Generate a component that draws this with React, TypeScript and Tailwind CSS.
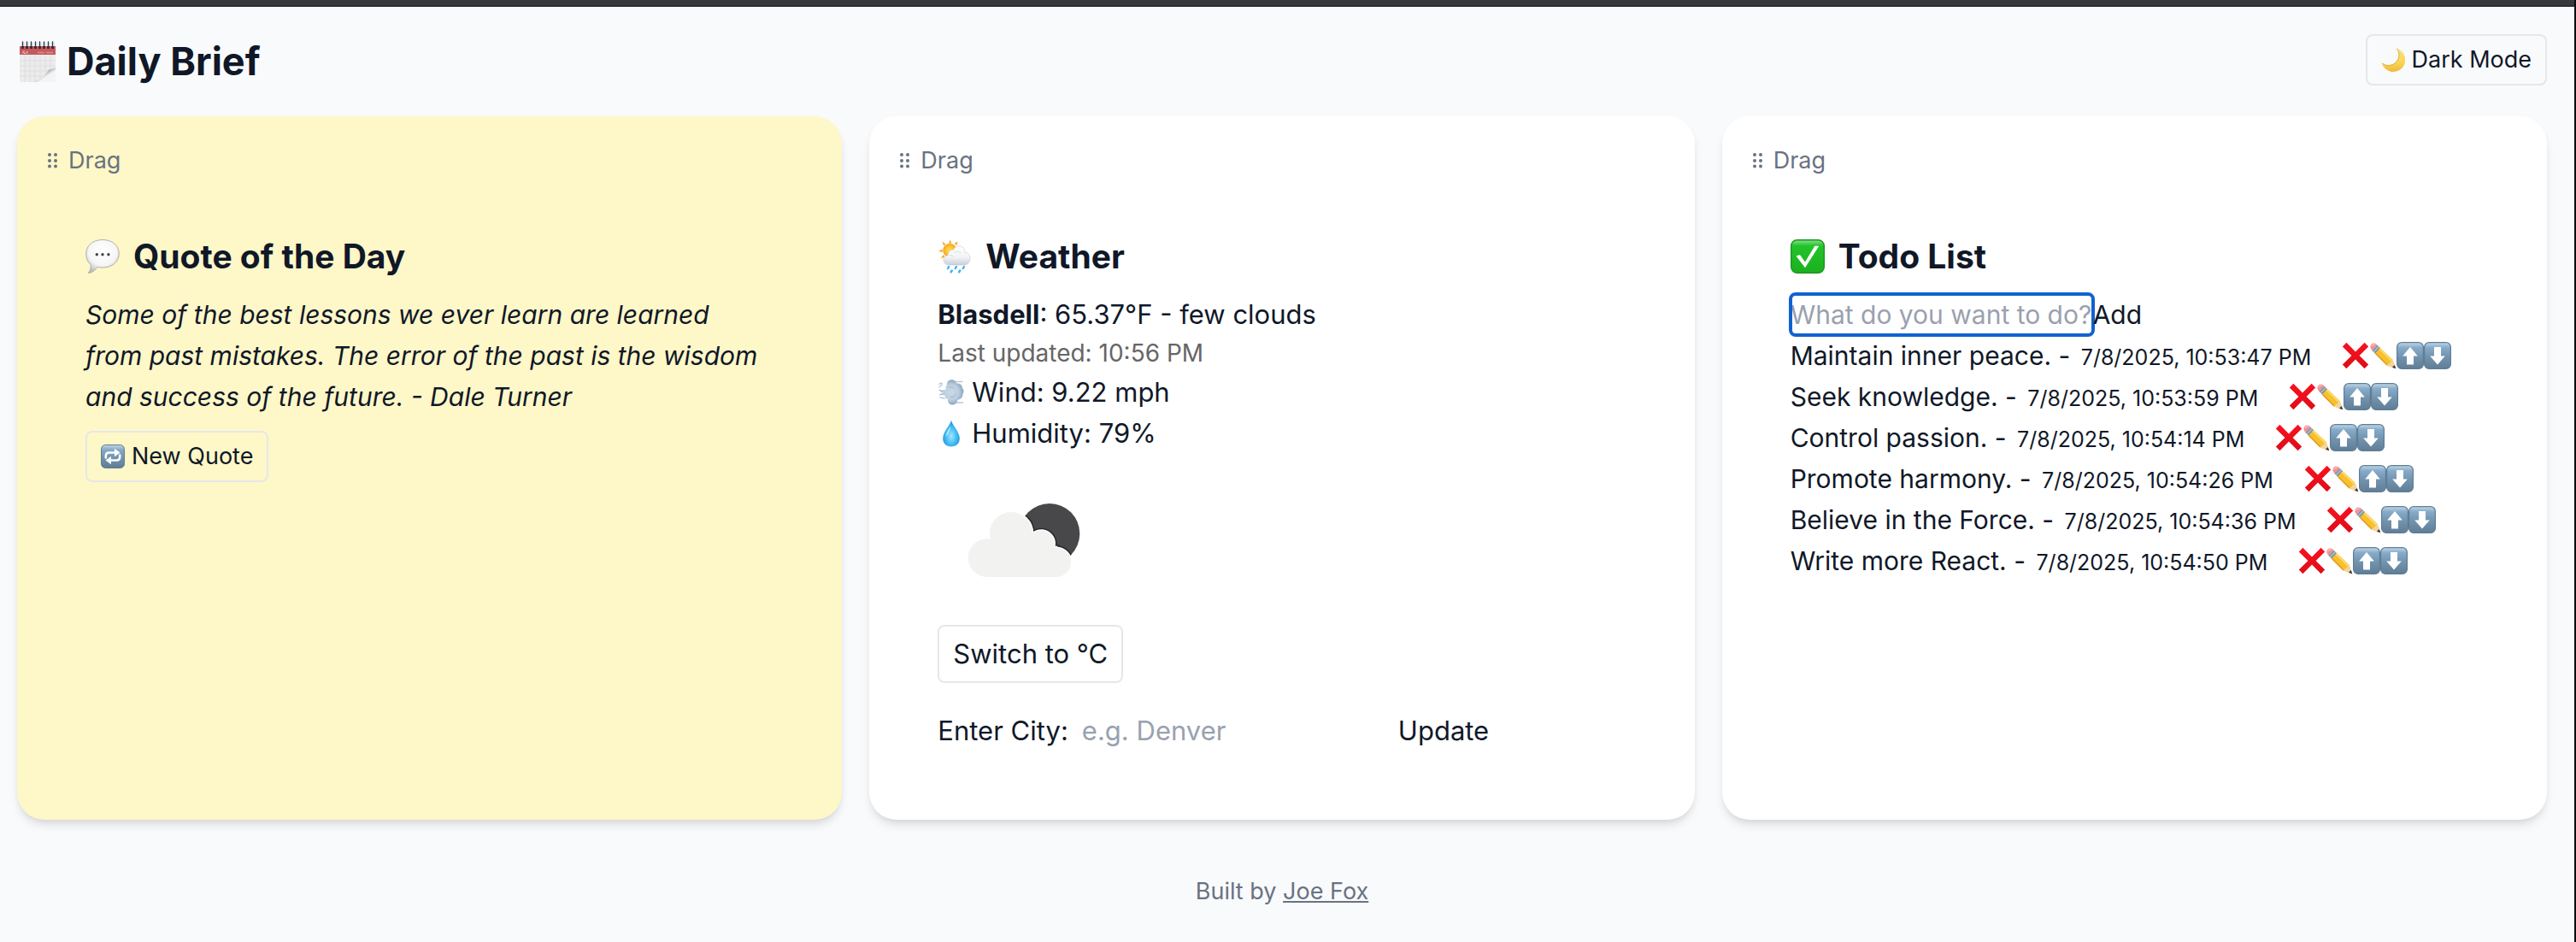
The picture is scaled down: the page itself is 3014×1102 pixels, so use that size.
import type { ReactNode } from "react";

function Gradients() {
  return (
    <svg aria-hidden="true" width="0" height="0" className="absolute">
      <defs>
        <linearGradient id="badge" x1="0" y1="0" x2="0" y2="1">
          <stop offset="0" stopColor="#c3d7e6" />
          <stop offset="0.2" stopColor="#86abc9" />
          <stop offset="0.55" stopColor="#7293ae" />
          <stop offset="1" stopColor="#607d96" />
        </linearGradient>
        <linearGradient id="green" x1="0" y1="0" x2="0" y2="1">
          <stop offset="0" stopColor="#8ae08c" />
          <stop offset="0.18" stopColor="#22c42a" />
          <stop offset="1" stopColor="#1cb01f" />
        </linearGradient>
        <linearGradient id="red" x1="0" y1="0" x2="0" y2="1">
          <stop offset="0" stopColor="#fb1020" />
          <stop offset="1" stopColor="#dd0e18" />
        </linearGradient>
        <radialGradient id="bubble" cx="0.5" cy="0.35" r="0.65">
          <stop offset="0" stopColor="#ffffff" />
          <stop offset="0.65" stopColor="#f6f6f6" />
          <stop offset="1" stopColor="#bdbdbd" />
        </radialGradient>
        <linearGradient id="moon" x1="0" y1="0" x2="0" y2="1">
          <stop offset="0" stopColor="#fbe08a" />
          <stop offset="0.6" stopColor="#fad552" />
          <stop offset="1" stopColor="#efb93a" />
        </linearGradient>
        <radialGradient id="sun">
          <stop offset="0" stopColor="#ffe052" />
          <stop offset="0.7" stopColor="#fdbf2d" />
          <stop offset="1" stopColor="#f59a1c" />
        </radialGradient>
        <linearGradient id="cloud" x1="0" y1="0" x2="0" y2="1">
          <stop offset="0" stopColor="#ffffff" />
          <stop offset="0.6" stopColor="#f1f3f6" />
          <stop offset="1" stopColor="#c9cfd8" />
        </linearGradient>
        <radialGradient id="puff">
          <stop offset="0" stopColor="#c9d9e6" />
          <stop offset="0.6" stopColor="#bccfe0" />
          <stop offset="1" stopColor="#8ba6be" />
        </radialGradient>
        <radialGradient id="drop" cx="0.5" cy="0.6" r="0.6">
          <stop offset="0" stopColor="#a5e6fb" />
          <stop offset="0.45" stopColor="#4fc4f6" />
          <stop offset="1" stopColor="#1489dc" />
        </radialGradient>
        <linearGradient id="curl" x1="0.25" y1="0.25" x2="0.85" y2="0.85">
          <stop offset="0.15" stopColor="#5c5c5c" />
          <stop offset="0.35" stopColor="#b5b5b5" />
          <stop offset="0.6" stopColor="#f4f4f4" />
        </linearGradient>
      </defs>
    </svg>
  );
}

function CalendarIcon() {
  return (
    <svg aria-hidden="true" viewBox="0 0 48 48" className="size-12 shrink-0">
      <path d="M3 6H45V31C40 35 38 37 34 41C29 46 25 47 19 48H3Z" fill="#ececec" />
      <path
        d="M9 17V48M15 17V48M21 17V47M27 17V46M33 17V41M39 17V36M3 23H45M3 29H45M3 35H40M3 41H34"
        stroke="#dcdcdc"
        strokeWidth="0.8"
        fill="none"
      />
      <path d="M45 31C43 33 40 32 37 34C34 37 34 43 19 48H45Z" fill="url(#curl)" />
      <path d="M3 6H45V16H3Z" fill="#c45a5c" />
      <path d="M24 13.5H42" stroke="#d98c8d" strokeWidth="1.6" strokeDasharray="8 2" />
      <path d="M6 14.5L8 11.5V14.5H10.5L12 12V14.5" stroke="#eab9b9" strokeWidth="1" fill="none" />
      <path d="M6.5 9V6M11.5 9V6M16.5 9V6M21.5 9V6M26.5 9V6M31.5 9V6M36.5 9V6M41.5 9V6" stroke="#4a2530" strokeWidth="3" />
      <path d="M6.5 1V7M11.5 1V7M16.5 1V7M21.5 1V7M26.5 1V7M31.5 1V7M36.5 1V7M41.5 1V7" stroke="#2f3b4a" strokeWidth="1.4" strokeLinecap="round" />
      <path d="M8 1.5V6M13 1.5V6M18 1.5V6M23 1.5V6M28 1.5V6M33 1.5V6M38 1.5V6M43 1.5V6" stroke="#c3cad2" strokeWidth="0.8" />
    </svg>
  );
}

function MoonIcon() {
  return (
    <svg aria-hidden="true" viewBox="0 0 28 28" className="size-7 shrink-0">
      <path d="M18 0.5A14 14 0 1 1 0.7 17.5A12.2 12.2 0 0 0 18 0.5Z" fill="url(#moon)" />
      <path d="M18 0.5A12.2 12.2 0 0 1 0.7 17.5" transform="translate(0.4 0.4)" fill="none" stroke="#d9a93a" strokeWidth="0.8" />
    </svg>
  );
}

function SpeechIcon() {
  return (
    <svg aria-hidden="true" viewBox="0 0 40 40" className="size-10 shrink-0">
      <path
        d="M20 0.5C31 0.5 39.3 7 39.3 16.8C39.3 26.5 31 33 20 33C17.5 33 15.5 32.7 14 32.3C11.5 36 8 39 3.8 39.5C3 39.5 3.3 38.6 4.5 37.5C6 35.5 6.3 32.5 6 29.5C2.5 26.5 0.7 22 0.7 16.8C0.7 7 9 0.5 20 0.5Z"
        fill="url(#bubble)"
        stroke="#a9a9a9"
        strokeWidth="0.9"
      />
      <g fill="#444444">
        <circle cx="13.3" cy="17.7" r="1.7" />
        <circle cx="20" cy="17.7" r="1.7" />
        <circle cx="26.9" cy="17.7" r="1.7" />
      </g>
    </svg>
  );
}

function SunShowerIcon() {
  return (
    <svg aria-hidden="true" viewBox="0 0 40 40" className="size-10 shrink-0">
      <g fill="#f5a623">
        <path d="M13 4.5L14.7 0.5L16.4 4.5Z" />
        <path d="M19.5 5L23.5 2.5L22.5 7Z" />
        <path d="M9.5 5.5L5.5 2.5L7 7.5Z" />
        <path d="M5.5 11.5L1 14L5.8 15Z" />
        <path d="M6.5 18L4 22.5L8.5 20.5Z" />
      </g>
      <circle cx="14.3" cy="13" r="8" fill="url(#sun)" />
      <path
        d="M13.5 30C9.5 30 7 27.5 7 24.3C7 21 9.5 19 12.2 18.8C12 14.5 15 12 18.5 12.3C20 9 23 7.5 26 8C30 8.5 32 11.5 32 15C35.5 15.5 38 18.5 38 22.5C38 27 35 30 31 30Z"
        fill="url(#cloud)"
        stroke="#c2c8d0"
        strokeWidth="0.6"
      />
      <path d="M14 18.5C16.5 18.5 18 19.5 19 20.5M19 15.5C22 13.5 26 14 27.5 16.5" stroke="#d3d8de" strokeWidth="0.8" fill="none" />
      <path
        d="M13.2 32L12 34M22 32L20.8 34M31 32L29.8 34M16.8 36.5L15.6 38.2M26.3 36.5L25.1 38.2"
        stroke="#3db3ee"
        strokeWidth="2.4"
        strokeLinecap="round"
      />
    </svg>
  );
}

function WindIcon() {
  return (
    <svg aria-hidden="true" viewBox="0 0 32 32" className="size-8 shrink-0">
      <path d="M20 3.5H29M22 28H29.5M3 22L8 23M2 6.5C4 4 6 5 5 7C4.5 8.5 2.5 8.5 2 10" stroke="#b9c9d8" strokeWidth="1.4" fill="none" strokeLinecap="round" />
      <path
        d="M1 12.5C4 14 7 13.5 10 12.5C9 10 9.5 8 11 7.5C10.5 4 13 1.3 16.5 1.3C19.5 1.3 21.5 3 22 5.5C26 5 29 7.5 29 11C31 12.5 31 16 29.5 18C29.5 22 27 24.5 23.5 24.5C23 28.5 20 31 16.5 30.5C13 30 11.5 27 12 23.5C9.5 24 8 22 9 20C6.5 19 4.5 18.5 1.5 19.5C3 17.5 5 17 7 16.8C5 16 2.5 15 1 12.5Z"
        fill="url(#puff)"
      />
      <path d="M13 11C15 9 18 9.5 19 12M15 21C18 22 21 20.5 21.5 17.5" stroke="#9db4c8" strokeWidth="1" fill="none" />
    </svg>
  );
}

function DropIcon() {
  return (
    <svg aria-hidden="true" viewBox="0 0 32 32" className="size-8 shrink-0">
      <path d="M16 0.5C17 6 25.8 14 25.8 22C25.8 27.8 21.5 31.5 16 31.5C10.5 31.5 6.2 27.8 6.2 22C6.2 14 15 6 16 0.5Z" fill="url(#drop)" />
      <path d="M15.5 7C13.5 11 10 15.5 9.5 20C12 17 14.5 13 15.5 7Z" fill="#e4f8ff" opacity="0.8" />
    </svg>
  );
}

function RepeatIcon() {
  return (
    <svg aria-hidden="true" viewBox="0 0 28 28" className="size-7 shrink-0">
      <rect x="0.5" y="0.5" width="27" height="27" rx="5" fill="url(#badge)" stroke="#5f7d95" />
      <path d="M5.8 15.5V13.5C5.8 11 7.3 9.5 9.8 9.5H17M22.2 12.5V14.5C22.2 17 20.7 18.5 18.2 18.5H11" stroke="#ffffff" strokeWidth="2.6" fill="none" strokeLinecap="round" />
      <path d="M16 4.8L22.5 9.5L16 14.2ZM12 13.8L5.5 18.5L12 23.2Z" fill="#ffffff" />
    </svg>
  );
}

function CheckIcon() {
  return (
    <svg aria-hidden="true" viewBox="0 0 40 40" className="size-10 shrink-0">
      <rect x="0.7" y="0.7" width="38.6" height="38.6" rx="7" fill="url(#green)" stroke="#1c9423" strokeWidth="1.4" />
      <path d="M6.5 19.5L11 18L17 26.5L28.3 7.7H33.3L17 33.3Z" fill="#ffffff" />
    </svg>
  );
}

function CrossIcon() {
  return (
    <svg aria-hidden="true" viewBox="0 0 32 32" className="size-8">
      <path d="M0.8 5.4L5.4 0.8L16 11.4L26.6 0.8L31.2 5.4L20.6 16L31.2 26.6L26.6 31.2L16 20.6L5.4 31.2L0.8 26.6L11.4 16Z" fill="url(#red)" />
    </svg>
  );
}

function PencilIcon() {
  return (
    <svg aria-hidden="true" viewBox="0 0 32 32" className="size-8">
      <path d="M9.5 3.8L27.5 20.8L31.2 31.2L20.8 27.5L3.5 10Z" fill="#f8c02c" />
      <path d="M7 13.5L3.5 10L9.5 3.8L13 7.2Z" fill="#7e95a8" />
      <path d="M5.2 11.7L11.3 5.5" stroke="#b9c6d1" strokeWidth="1.2" />
      <path d="M3.5 10C1 7.5 0.8 5 2.5 2.8C4.5 0.6 7.3 1.2 9.5 3.8Z" fill="#f08f96" />
      <path d="M3 5C4 3 5.5 2.6 7 3.5" stroke="#f9c4c7" strokeWidth="1.3" fill="none" />
      <path d="M12 8L27 22.3" stroke="#fde07a" strokeWidth="1.6" />
      <path d="M7.5 13.5L21 26.9" stroke="#dd9a16" strokeWidth="1.4" />
      <path d="M27.5 20.8L31.2 31.2L20.8 27.5C21.5 26 22.3 25.7 23.8 25.8C23.6 24.2 24.5 23.3 25.8 23.5C25.8 22 26.3 21.2 27.5 20.8Z" fill="#f2d5a0" />
      <path d="M29.7 27L31.3 31.3L27 29.7Z" fill="#3a3330" />
    </svg>
  );
}

function ArrowBadge({ down = false }: { down?: boolean }) {
  return (
    <svg aria-hidden="true" viewBox="0 0 32 32" className="size-8">
      <rect x="0.6" y="0.6" width="30.8" height="30.8" rx="5.5" fill="url(#badge)" stroke="#5f7d95" strokeWidth="1.2" />
      <path
        d={down ? "M16 26.5L7.2 16.5H12V6H20V16.5H24.8Z" : "M16 6L24.8 16.5H20V26.5H12V16.5H7.2Z"}
        fill="#ffffff"
      />
    </svg>
  );
}

function NightCloudImage() {
  const cloud = (
    <>
      <circle cx="225" cy="278" r="67" />
      <circle cx="309" cy="192" r="75" />
      <circle cx="415" cy="228" r="46" />
      <circle cx="468" cy="294" r="51" />
      <path d="M225 240H468V345H225Z" />
    </>
  );
  return (
    <svg role="img" aria-label="few clouds" viewBox="51 -87 600 600" className="size-[200px]">
      <clipPath id="moon-disc">
        <circle cx="444" cy="193" r="106" />
      </clipPath>
      <circle cx="444" cy="193" r="106" fill="#48484a" />
      <g clipPath="url(#moon-disc)" stroke="#2b2b2d" strokeWidth="18">
        {cloud}
      </g>
      <g stroke="#ffffff" strokeWidth="8">
        {cloud}
      </g>
      <g fill="#f2f2f0">{cloud}</g>
    </svg>
  );
}

function Card({ tint, children }: { tint: string; children: ReactNode }) {
  return (
    <section
      className={`${tint} rounded-[32px] p-8 shadow-[0_8px_12px_-2px_rgba(0,0,0,0.1),0_4px_8px_-4px_rgba(0,0,0,0.1)]`}
    >
      <button type="button" className="mb-4 flex cursor-grab items-center gap-2 text-[27px] leading-10 text-gray-500">
        <svg aria-hidden="true" viewBox="0 0 20 20" className="size-5" fill="currentColor">
          <circle cx="6" cy="3" r="2" />
          <circle cx="13" cy="3" r="2" />
          <circle cx="6" cy="10" r="2" />
          <circle cx="13" cy="10" r="2" />
          <circle cx="6" cy="16.5" r="2" />
          <circle cx="13" cy="16.5" r="2" />
        </svg>
        Drag
      </button>
      <div className="p-12">{children}</div>
    </section>
  );
}

function CardTitle({ icon, children }: { icon: ReactNode; children: ReactNode }) {
  return (
    <h2 className="mb-4 flex items-center gap-4 text-[39px] leading-[56px] font-bold">
      {icon}
      {children}
    </h2>
  );
}

const todos = [
  { text: "Maintain inner peace.", time: "7/8/2025, 10:53:47 PM" },
  { text: "Seek knowledge.", time: "7/8/2025, 10:53:59 PM" },
  { text: "Control passion.", time: "7/8/2025, 10:54:14 PM" },
  { text: "Promote harmony.", time: "7/8/2025, 10:54:26 PM" },
  { text: "Believe in the Force.", time: "7/8/2025, 10:54:36 PM" },
  { text: "Write more React.", time: "7/8/2025, 10:54:50 PM" },
];

export default function App() {
  return (
    <div className="flex min-h-screen bg-[#f9fafc] font-['Inter',sans-serif] text-[30px] leading-[48px] text-gray-900">
      <Gradients />
      <div className="min-w-0 flex-1">
        <div className="h-2 border-b-2 border-[#2d2c30] bg-[#39383d]" />
        <div className="pt-8 pr-8 pl-5">
          <header className="mb-8 flex items-start justify-between">
            <h1 className="flex items-center gap-2.5 text-[45px] leading-[64px] font-bold">
              <CalendarIcon />
              Daily Brief
            </h1>
            <button
              type="button"
              className="flex items-center gap-2 rounded-lg border-2 border-gray-200 px-4 py-2 text-[27px] leading-10"
            >
              <MoonIcon />
              Dark Mode
            </button>
          </header>

          <main className="grid grid-cols-3 gap-8">
            <Card tint="bg-[#fef7c7]">
              <CardTitle icon={<SpeechIcon />}>Quote of the Day</CardTitle>
              <p className="pr-2 italic">
                Some of the best lessons we ever learn are learned from past mistakes. The error of the past is the
                wisdom and success of the future. - Dale Turner
              </p>
              <button
                type="button"
                className="mt-4 flex items-center gap-2 rounded-lg border-2 border-gray-200 px-4 py-2 text-[27px] leading-10"
              >
                <RepeatIcon />
                New Quote
              </button>
            </Card>

            <Card tint="bg-white">
              <CardTitle icon={<SunShowerIcon />}>Weather</CardTitle>
              <div className="text-[31px]">
                <p>
                  <strong className="font-bold">Blasdell</strong>: 65.37°F - few clouds
                </p>
                <p className="text-[28px] leading-[43px] text-[#666666]">Last updated: 10:56 PM</p>
                <p className="flex items-center gap-2">
                  <WindIcon />
                  Wind: 9.22 mph
                </p>
                <p className="flex items-center gap-2">
                  <DropIcon />
                  Humidity: 79%
                </p>
                <NightCloudImage />
                <button type="button" className="rounded-lg border-2 border-gray-200 px-4 py-2">
                  Switch to °C
                </button>
                <form className="mt-8 flex items-center gap-4" onSubmit={(e) => e.preventDefault()}>
                  <label htmlFor="city">Enter City:</label>
                  <input
                    id="city"
                    type="text"
                    placeholder="e.g. Denver"
                    className="h-12 w-[354px] outline-none placeholder:text-gray-400"
                  />
                  <button type="submit">Update</button>
                </form>
              </div>
            </Card>

            <Card tint="bg-white">
              <CardTitle icon={<CheckIcon />}>Todo List</CardTitle>
              <form className="flex" onSubmit={(e) => e.preventDefault()}>
                <input
                  type="text"
                  aria-label="New todo"
                  placeholder="What do you want to do?"
                  className="h-12 w-[354px] rounded-md outline-4 -outline-offset-2 outline-[#1062d0] placeholder:text-gray-400"
                />
                <button type="submit">Add</button>
              </form>
              <ul>
                {todos.map((todo) => (
                  <li key={todo.text} className="flex items-center">
                    <span className="whitespace-nowrap">
                      {todo.text} - <small className="ml-1 text-[25px] leading-none">{todo.time}</small>
                    </span>
                    <span className="ml-9 flex">
                      <button type="button" aria-label="Delete">
                        <CrossIcon />
                      </button>
                      <button type="button" aria-label="Edit">
                        <PencilIcon />
                      </button>
                      <button type="button" aria-label="Move up">
                        <ArrowBadge />
                      </button>
                      <button type="button" aria-label="Move down">
                        <ArrowBadge down />
                      </button>
                    </span>
                  </li>
                ))}
              </ul>
            </Card>
          </main>

          <footer className="mt-16 text-center text-[27px] leading-10 text-gray-500">
            Built by{" "}
            <a href="#" className="underline">
              Joe Fox
            </a>
          </footer>
        </div>
      </div>
      <div className="w-0.5 bg-[#0c0c10]" />
    </div>
  );
}
